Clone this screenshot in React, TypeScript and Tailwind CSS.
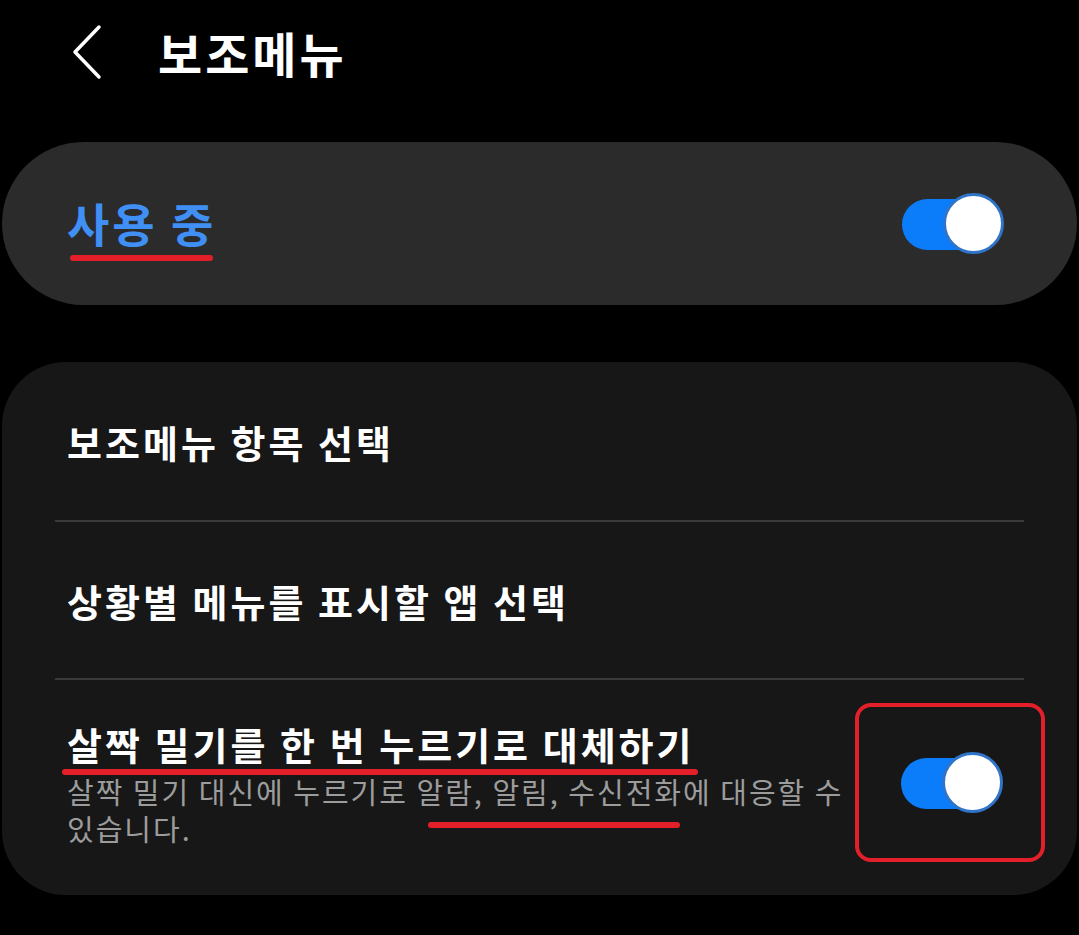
import React from "react";

const font = { fontFamily: '"Noto Sans CJK KR", "Noto Sans", sans-serif' };

function Toggle() {
  return (
    <div className="relative w-[102px] h-[62px]">
      <div className="absolute left-0 top-[6px] w-[84px] h-[51px] rounded-full bg-[#0b7dfb]" />
      <div className="absolute right-0 top-0 w-[61px] h-[61px] rounded-full bg-white border-[3px] border-[#2f74c9]" />
    </div>
  );
}

function Mark({ children, className }: { children: React.ReactNode; className: string }) {
  return (
    <span className="relative">
      {children}
      <span className={"absolute h-[6px] rounded-full bg-[#e3202a] " + className} />
    </span>
  );
}

export default function App() {
  return (
    <div className="w-[1079px] h-[935px] bg-black text-white overflow-hidden" style={font}>
      <header className="h-[104px] flex items-center">
        <svg className="ml-[70px] w-[36px] h-[56px]" viewBox="0 0 36 56" fill="none">
          <path d="M29 3 L5 28 L29 53" stroke="white" strokeWidth="3.5" strokeLinecap="round" strokeLinejoin="round" />
        </svg>
        <h1 className="ml-[52px] text-[48px] font-bold tracking-[3px]">보조메뉴</h1>
      </header>

      <section className="mt-[38px] mx-[2px] h-[163px] rounded-full bg-[#2b2b2b] flex items-center justify-between pl-[65px] pr-[73px]">
        <span className="text-[46px] font-bold text-[#3f8ff5] tracking-[3px] -mt-[2px]">
          <Mark className="left-[3px] right-[3px] bottom-[-6px]">사용 중</Mark>
        </span>
        <Toggle />
      </section>

      <section className="mt-[57px] mx-[2px] h-[533px] rounded-[64px] bg-[#171717] flex flex-col">
        <div className="h-[158px] flex items-center pl-[65px] text-[38px] font-semibold tracking-[3px]">보조메뉴 항목 선택</div>
        <div className="mx-[53px] h-[2px] bg-[#3a3a3a]" />
        <div className="h-[156px] flex items-center pl-[65px] text-[38px] font-semibold tracking-[3px]">상황별 메뉴를 표시할 앱 선택</div>
        <div className="mx-[53px] h-[2px] bg-[#3a3a3a]" />
        <div className="flex-1 flex items-center justify-between pl-[65px] pr-[32px] pb-[10px]">
          <div className="w-[790px]">
            <div className="text-[38px] font-semibold leading-[50px] tracking-[3px]">
              <Mark className="left-[-5px] right-[-3px] bottom-[-4px]">살짝 밀기를 한 번 누르기로 대체하기</Mark>
            </div>
            <p className="mt-[4px] text-[29px] leading-[37px] text-[#9c9c9c] tracking-[2px]">
              살짝 밀기 대신에 누르기로 <Mark className="left-[12px] right-[3px] bottom-[-16px]">알람, 알림, 수신전화</Mark>에 대응할 수
              <br />
              있습니다.
            </p>
          </div>
          <div className="w-[191px] h-[159px] rounded-[16px] border-[4px] border-[#e3202a] flex items-center justify-center pl-[4px]">
            <Toggle />
          </div>
        </div>
      </section>
    </div>
  );
}
